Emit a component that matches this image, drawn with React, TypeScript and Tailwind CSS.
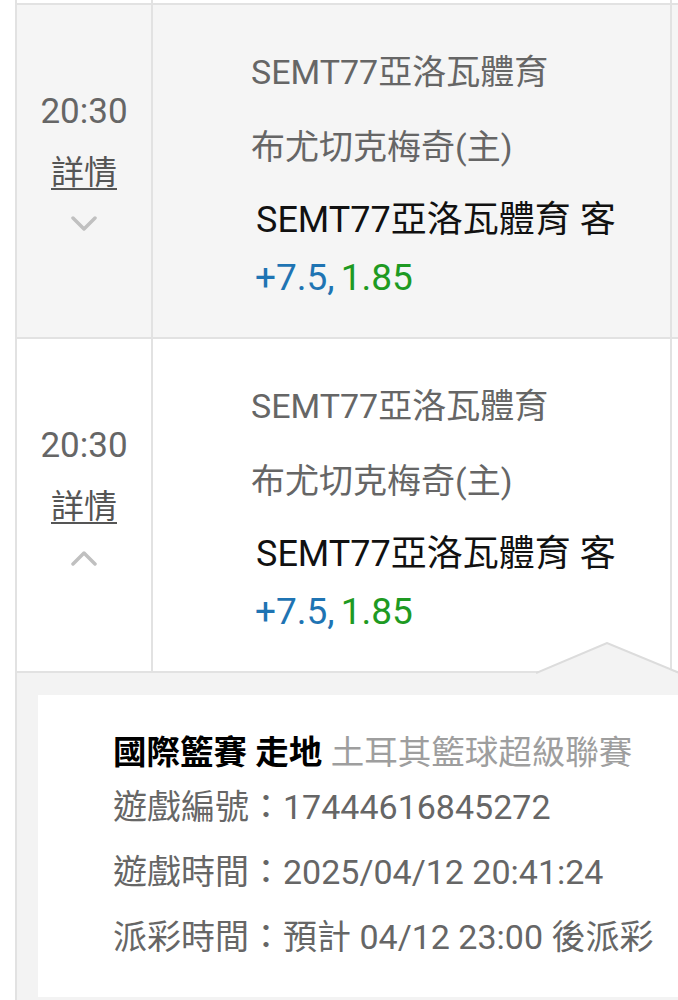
import React from "react";

const font = { fontFamily: "Roboto, 'Noto Sans CJK TC', 'Noto Sans', sans-serif" };

const Chevron: React.FC<{ up?: boolean }> = ({ up }) => (
  <svg width="28" height="16" viewBox="0 0 28 16" fill="none">
    <path
      d={up ? "M3 14 L14 3 L25 14" : "M3 2 L14 13 L25 2"}
      stroke="#c0c0c0"
      strokeWidth="3.5"
      strokeLinecap="round"
      strokeLinejoin="round"
    />
  </svg>
);

const Row: React.FC<{ open?: boolean; shaded?: boolean }> = ({ open, shaded }) => (
  <div className={`flex h-[334px] border-b-2 border-[#e2e2e2] ${shaded ? "bg-[#f5f5f5]" : "bg-white"}`}>
    <div className="w-[138px] shrink-0 border-l-2 border-r-2 border-[#e2e2e2] flex flex-col items-center pt-[87px]">
      <div className="text-[35px] leading-[40px] text-[#666]">20:30</div>
      <a className="mt-[24px] text-[33px] leading-[34px] text-[#555] underline decoration-2 underline-offset-[4px]">詳情</a>
      <div className="mt-[26px]">
        <Chevron up={open} />
      </div>
    </div>
    <div className="w-[519px] shrink-0 border-r-2 border-[#e2e2e2] pl-[98px] pt-[30px]">
      <div className="text-[34px] leading-[75px] text-[#666]">SEMT77亞洛瓦體育</div>
      <div className="text-[34px] leading-[75px] text-[#666]">布尤切克梅奇(主)</div>
      <div className="pl-[5px] text-[36px] leading-[70px] text-[#111]">SEMT77亞洛瓦體育 客</div>
      <div className="pl-[4px] text-[37px] leading-[46px]">
        <span className="text-[#1f74b3]">+7.5,</span>
        <span className="ml-[6px] text-[#1e9a22]">1.85</span>
      </div>
    </div>
    <div className="flex-1" />
  </div>
);

export default function App() {
  return (
    <div className="w-[678px] h-[1000px] overflow-hidden bg-white" style={font}>
      <div className="pl-[15px]">
        <div className="flex h-[3px] border-b-2 border-[#e2e2e2] box-content">
          <div className="w-[138px] border-l-2 border-r-2 border-[#e2e2e2]" />
          <div className="w-[519px] border-r-2 border-[#e2e2e2]" />
        </div>
        <Row shaded />
        <Row open />
        <div className="relative border-l-2 border-[#e2e2e2] bg-[#f3f3f3] pt-[22px] h-[400px]">
          <svg className="absolute left-[519px] top-[-31px]" width="146" height="33" viewBox="0 0 146 33">
            <polygon points="0,31 71,1 146,33 146,33 0,33" fill="#f3f3f3" />
            <polyline points="0,31 71,1 146,32" fill="none" stroke="#dcdcdc" strokeWidth="2" />
          </svg>
          <div className="ml-[21px] h-[302px] bg-white pl-[75px] pt-[36px]">
            <div className="text-[33.5px] leading-[44px]">
              <span className="font-bold text-black">國際籃賽 走地</span>{" "}
              <span className="text-[#9e9e9e]">土耳其籃球超級聯賽</span>
            </div>
            <div className="text-[34px] leading-[65px] text-[#666]">遊戲編號：17444616845272</div>
            <div className="text-[34px] leading-[65px] text-[#666]">遊戲時間：2025/04/12 20:41:24</div>
            <div className="text-[34px] leading-[65px] text-[#666]">派彩時間：預計 04/12 23:00 後派彩</div>
          </div>
        </div>
      </div>
    </div>
  );
}
